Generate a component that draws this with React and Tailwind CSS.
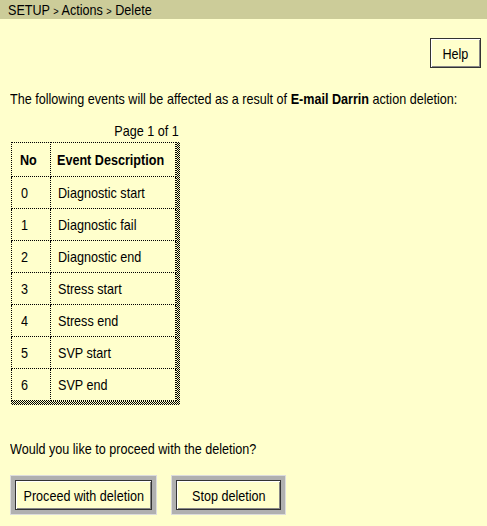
function T({ children, o = "left" }) {
  const origin = o === "right" ? "origin-right" : o === "center" ? "origin-center" : "origin-left";
  return <span className={"inline-block scale-x-[0.84] whitespace-nowrap " + origin}>{children}</span>;
}

export default function App() {
  const rows = [
    ["0", "Diagnostic start"],
    ["1", "Diagnostic fail"],
    ["2", "Diagnostic end"],
    ["3", "Stress start"],
    ["4", "Stress end"],
    ["5", "SVP start"],
    ["6", "SVP end"],
  ];
  const font = { fontFamily: '"Liberation Sans", Arial, sans-serif' };
  const btn =
    "h-[30px] bg-[#ffffcc] border border-[#333] shadow-[inset_1px_1px_0_#fff,inset_-1px_-1px_0_#888] flex items-center justify-center";
  return (
    <div className="w-[487px] h-[526px] overflow-hidden bg-[#ffffcc] text-black text-[15px] leading-none" style={font}>
      <div className="h-[19px] bg-[#cccc99] pl-[8px] flex items-center">
        <T>
          SETUP <span className="text-[11px]">&gt;</span> Actions <span className="text-[11px]">&gt;</span> Delete
        </T>
      </div>
      <div className="flex justify-end pr-[6px] pt-[19px]">
        <div className={"w-[51px] " + btn}>
          <T o="center">Help</T>
        </div>
      </div>
      <div className="pl-[10px] pt-[23px] h-[55px] overflow-hidden">
        <T>
          The following events will be affected as a result of <b>E-mail Darrin</b> action deletion:
        </T>
      </div>
      <div className="pl-[11px]">
        <div className="w-[168px] text-right h-[19px]">
          <T o="right">Page 1 of 1</T>
        </div>
        <div className="w-[169px] pr-[4px] pb-[4px] bg-[repeating-conic-gradient(#000_0_25%,#ffffcc_0_50%)] bg-[length:2px_2px]">
          <table className="table-fixed border-collapse w-[165px] bg-[#ffffcc]">
            <colgroup>
              <col className="w-[39px]" />
              <col />
            </colgroup>
            <thead>
              <tr className="h-[34px]">
                <th className="border border-dotted border-black text-left font-bold pl-[8px] overflow-hidden">
                  <T>No</T>
                </th>
                <th className="border border-dotted border-black text-left font-bold pl-[6px] overflow-hidden">
                  <T>Event Description</T>
                </th>
              </tr>
            </thead>
            <tbody>
              {rows.map(([n, d]) => (
                <tr key={n} className="h-[32px]">
                  <td className="border border-dotted border-black pl-[9px]">
                    <T>{n}</T>
                  </td>
                  <td className="border border-dotted border-black pl-[7px] overflow-hidden">
                    <T>{d}</T>
                  </td>
                </tr>
              ))}
            </tbody>
          </table>
        </div>
      </div>
      <div className="pl-[10px] pt-[36px]">
        <T>Would you like to proceed with the deletion?</T>
      </div>
      <div className="flex gap-[14px] pl-[10px] pt-[19px]">
        <div className="bg-[#b0b0b0] border border-[#dcdcdc] px-[4px] py-[4px]">
          <div className={"w-[137px] " + btn}>
            <T o="center">Proceed with deletion</T>
          </div>
        </div>
        <div className="bg-[#b0b0b0] border border-[#dcdcdc] px-[4px] py-[4px]">
          <div className={"w-[105px] " + btn}>
            <T o="center">Stop deletion</T>
          </div>
        </div>
      </div>
    </div>
  );
}
